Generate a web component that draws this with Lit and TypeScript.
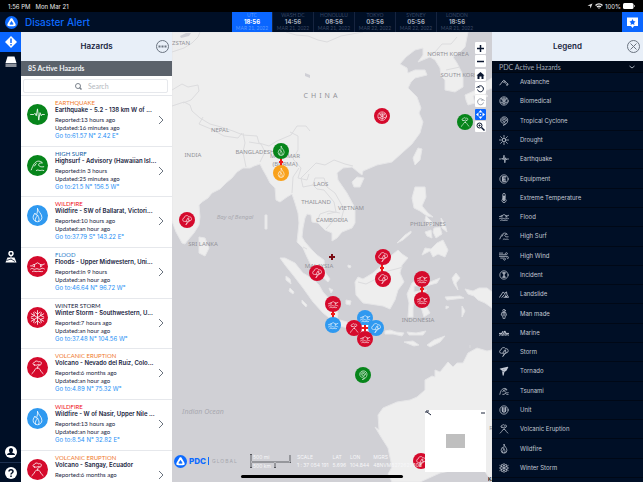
import { LitElement, html, svg, css, nothing, TemplateResult } from "lit";
import { customElement, property } from "lit/decorators.js";
import { classMap } from "lit/directives/class-map.js";

/* Line glyphs on a 24 x 24 grid, drawn with the current colour. */
const GLYPHS: Record<string, TemplateResult> = {
  avalanche: svg`<path d="M2 19 11 8l4 2 3 4 4 3M9 11l2 2 2-2 2 4" stroke-width="2"/><circle cx="19" cy="19" r="1"/>`,
  biomedical: svg`<circle cx="12" cy="12" r="10"/><path d="M12 4v16M12 8c-3-3-5-1-5 1s3 3 5 3 4 2 4 4-2 3-4 1M12 8c3-3 5-1 5 1s-3 3-5 3-4 2-4 4 2 3 4 1M5 6l3 2M19 6l-3 2M4 15h3M20 15h-3"/>`,
  cyclone: svg`<path d="M13 14a3 3 0 1 1 2-4c1 4-2 7-5 7s-6-3-6-7c0-5 4-8 9-8s8 4 8 8c0 7-5 11-11 12 3-1 4-2 5-4M7 10c0-3 2-5 5-5 4 0 6 3 6 6"/>`,
  drought: svg`<circle cx="12" cy="12" r="4"/><path d="M12 1v5M12 18v5M1 12h5M18 12h5M4 4l4 4M16 16l4 4M20 4l-4 4M8 16l-4 4"/>`,
  earthquake: svg`<path d="M1 12h5l2-2 2 4 2-11 2 18 2-12 2 5 1-2h4"/>`,
  equipment: svg`<circle cx="12" cy="12" r="10"/><path d="M16 7H9v10h7M9 12h6" stroke-width="3"/>`,
  temperature: svg`<path d="M9 14V4a3 3 0 0 1 6 0v10a5 5 0 1 1-6 0Z"/><path d="M12 8v10" stroke-width="4"/>`,
  flood: svg`<path d="M1 11h4l2 2V9l5-3 5 3v4l3-4 3-1M1 16c3-3 5 2 8 0s5 2 8 0 4-1 6 0M4 20c3-2 5 1 8 0s5 1 8 0M5 9h2M17 9h2"/>`,
  surf: svg`<path d="M2 19C5 11 8 5 14 5c4 0 6 3 6 3s-5-1-6 2 3 5 8 4M10 20c2-2 4 0 6 0s3-1 6 0M7 13l3-4"/>`,
  wind: svg`<path d="M1 9h16c4 0 4-5 1-5-2 0-3 1-3 3M1 13h19c4 0 4 5 1 5-2 0-2-1-2-2M4 17h9c4 0 3 5 0 5-2 0-2-1-2-2M1 5h8"/>`,
  incident: svg`<circle cx="12" cy="12" r="10"/><path d="M12 7v10M9 7h6M9 17h6" stroke-width="3"/>`,
  landslide: svg`<path d="M1 20 10 7l4 4M7 20l5-6M14 10l4-3 1 6 4 7H12M15 14l3 4M15 18h3" stroke-width="2"/>`,
  manmade: svg`<circle cx="12" cy="4" r="3"/><path d="M8 8h8l2 7-3 2-1 6h-4l-1-6-3-2ZM10 9v7M14 9v7"/>`,
  marine: svg`<path d="M1 13h6l2-5 3 3 2-4 3 6h6M1 17c4-3 6 2 9 0s5 1 7 0 4-1 6 0M6 13l3 2 4-3 4 3" stroke-width="2.4"/>`,
  storm: svg`<path d="M8 15H6a4 4 0 0 1-1-8 6 6 0 0 1 11-3 5 5 0 0 1 2 10l-2 1M13 8l-4 7h4l-4 8 9-11h-4l2-4Z"/>`,
  tornado: svg`<path d="M3 7 21 3l-4 7-5 3-2 9-1-7M6 9l12-3M8 12l8-3M7 8l5 4" stroke-width="2.6"/>`,
  tsunami: svg`<path d="M2 20C4 12 6 8 11 6c5-1 8 1 8 4-3-3-7-1-5 3 1 3 5 4 8 3M9 20h4l2-3 3 3h4M12 9l-3 5"/>`,
  unit: svg`<circle cx="12" cy="12" r="10"/><path d="M8 6v8a4 3 0 0 0 8 0V6M12 6v7" stroke-width="2.6"/>`,
  volcano: svg`<path d="M3 22c3-2 4-6 7-9h4c3 3 4 7 7 9M12 13c0-3 1-4 3-5M7 8C4 8 4 4 7 4c1-3 5-3 6-1 3-1 6 0 5 3 0 2-3 3-5 1-2 2-4 1-6 1Z"/>`,
  wildfire: svg`<path d="M12 1c1 5 7 8 7 14a7 7 0 0 1-14 0c0-3 2-5 3-7 1 2 1 3 2 3 2-3 2-6 2-10ZM9 21c-2-5 2-6 3-10 1 3 4 6 2 10"/>`,
  winter: svg`<path d="M12 1v22M2 6l20 12M22 6 2 18M8 3l4 4 4-4M8 21l4-4 4 4M2 11l5-2-1-5M22 13l-5 2 1 5M2 13l5 2-1 5M22 11l-5-2 1-5"/>`,
};

const glyph = (name: string, width = 1.8) => svg`
  <g fill="none" stroke="currentColor" stroke-width=${width} stroke-linecap="round" stroke-linejoin="round">${GLYPHS[name]}</g>`;

const logo = (id: string) => html`
  <svg class="logo" viewBox="0 0 24 24" role="img" aria-label=${id}>
    <circle cx="12" cy="12" r="12" fill="#0d6bff"/>
    <path d="M12 4c2 0 2 1 3 3l4 7c2 4 0 5-3 5H8c-3 0-5-1-3-5l4-7c1-2 1-3 3-3Z" fill="#fff"/>
    <path d="M12 10l3 5H9Z" fill="#0d6bff" stroke="#0d6bff" stroke-width="1.5" stroke-linejoin="round"/>
  </svg>`;

@customElement("hazard-card")
class HazardCard extends LitElement {
  @property() icon = "";
  @property() color = "";
  @property() kind = "";
  @property() tone = "";
  @property() name = "";
  @property() reported = "";
  @property() changed = "";
  @property() place = "";

  static styles = css`
    :host { display: flex; align-items: flex-start; box-sizing: border-box; padding: 3px 8px 0 6px; border-top: 1px solid #e6e8ec; color: #17233d; }
    .disc { flex: none; width: 21px; height: 21px; margin: 5px 7px 0 0; border-radius: 50%; color: #fff; display: grid; place-items: center; }
    .disc svg { width: 15px; height: 15px; }
    .green { background: #07851b; }
    .blue { background: #2f99f0; }
    .red { background: #d50a2c; }
    .text { flex: 1; min-width: 0; font-size: 6px; line-height: 8px; white-space: nowrap; }
    h3, p { margin: 0; }
    p { font-family: Lato, sans-serif; }
    .kind, .name { line-height: 7px; }
    .name { font-size: 6px; font-weight: 600; margin-bottom: 3px; }
    .orange { color: #f07a2a; }
    .navy { color: #0c5da5; }
    .scarlet { color: #f01020; }
    .sky { color: #2b7fcc; }
    .dark { color: #17233d; }
    a { color: #1e8ff5; text-decoration: none; display: block; }
    .open { flex: none; border: 0; background: none; padding: 0; width: 6px; height: 10px; margin: 16px 0 0 2px; color: #6b7480; display: grid; }
  `;

  render() {
    return html`
      <span class=${classMap({ disc: true, [this.color]: true })}><svg viewBox="0 0 24 24">${glyph(this.icon, 1.3)}</svg></span>
      <div class="text">
        <p class=${classMap({ kind: true, [this.tone]: true })}>${this.kind}</p>
        <h3 class="name">${this.name}</h3>
        <p>Reported:${this.reported}</p>
        ${this.changed ? html`<p>Updated:${this.changed}</p>` : nothing}
        ${this.place ? html`<a href="#map">Go to:${this.place}</a>` : nothing}
      </div>
      <button class="open" aria-label="Open details"><svg viewBox="0 0 6 10"><path d="M1 1l4 4-4 4" fill="none" stroke="currentColor"/></svg></button>`;
  }
}

const LAND = [
  "M172 32V221L176 232 182 243 185 244 188 240 194 233 199 225 200 217 199 205 202 202 208 198 212 193 220 189 226 183 232 178 237 172 243 168 250 168 254 166 260 164 263 170 267 177 270 183 275 188 276 200 280 202 287 197 292 194 295 203 298 213 299 223 297 242 303 248 307 257 312 267 320 275 328 282 330 279 325 272 324 260 317 255 312 250 305 242 302 237 303 228 305 218 307 214 311 215 312 222 318 223 325 230 332 233 332 241 337 238 342 232 352 228 355 223 355 208 347 193 338 180 337 173 343 168 352 167 358 172 362 175 363 171 377 165 392 162 402 153 412 144 420 133 423 122 419 113 421 108 417 97 408 88 411 82 415 78 427 75 425 70 415 70 408 73 407 68 400 64 406 57 415 50 423 48 423 55 418 62 430 57 435 60 440 68 441 76 445 80 445 90 455 92 463 87 463 75 457 63 453 57 460 52 465 47 468 32Z",
  "M199 237 205 238 209 248 205 256 199 253Z",
  "M280 258 285 258 295 263 303 273 313 279 319 285 323 292 332 302 338 313 337 320 333 321 323 313 313 302 303 288 293 275 285 265Z",
  "M333 318 347 322 357 323 370 325 382 330 380 333 360 331 340 326Z",
  "M355 282 358 277 363 279 373 273 382 265 387 262 392 255 398 250 402 254 408 258 402 265 400 273 404 282 398 290 395 300 390 309 383 306 370 304 363 303 356 295Z",
  "M412 283 416 280 430 282 440 278 437 283 426 286 414 286 414 292 427 290 419 296 424 303 430 313 424 317 421 307 415 299 413 308 413 317 408 317 409 303 407 294Z",
  "M415 187 425 187 426 197 422 206 428 213 433 217 427 216 420 211 414 208 412 198Z",
  "M422 255 425 248 431 249 437 243 443 240 448 250 445 257 438 254 433 257 430 251Z",
  "M426 216 430 220 434 224 429 226 425 220ZM434 228 440 227 442 234 436 238 433 232ZM425 232 431 230 432 238 427 236ZM441 218 445 224 447 232 442 228Z",
  "M397 243 405 235 411 231 411 233 403 240Z",
  "M415 165 413 158 418 148 422 149 420 160Z",
  "M352 182 357 177 364 178 360 187 354 187Z",
  "M465 95 474 91 482 84 492 78V88L482 92 488 96 482 99 478 95 473 96 475 103 468 105 466 100Z",
  "M465 289 473 291 479 288 487 288 492 292V308L485 303 478 300 474 296 468 294Z",
  "M452 278 456 273 460 278 456 283 458 290 454 284ZM445 297 460 296 464 298 447 300Z",
  "M385 331l5-1 6 2 8 1-2 3-9-2-8 0ZM407 332l9 1 10-2-3 4-14 0ZM404 342l9-1 6 4-5 1ZM427 345l7-5 11-4-5 6-10 5ZM462 306l3 5-3 6ZM446 306l3 1-3 2Z",
  "M492 350 487 351 477 348 468 353 463 363 457 363 453 367 448 362 440 372 435 370 435 377 432 376 425 380 425 390 417 397 410 400 397 402 383 408 378 415 379 430 375 427 381 437 388 448 392 467 388 474 392 482H420L440 473 475 466 484 470 492 482Z",
  "M286 276l4 3 1 5-5-4ZM290 288l4 4-1 2-4-3ZM302 300l5 5-1 2-4-4ZM346 300l5 1-1 4-4-1ZM265 215l2 0 0 14-2 0ZM348 265l3 1-1 2-2-1ZM329 288l4 2-2 3Z",
];

const LAKES = ["M305 73l5 2 0 3-5-2Z", "M180 36l6-3 5 0-2 3-8 2Z"];

const BORDERS = [
  "M172 52l12-4 8-5 6-6 2-5M286 32l10 3 12 1 10 4 9 2 14-6 22-4",
  "M172 106l12-4 6 3 2 6 8 7 10 6 11 3 12 4 10 4 14 1 2 7 10 3 8-5 14-6 6-9 9 0 4 5",
  "M203 117l-4 7 12 5 13 7 14 2 4-5M243 133l2 10-2 9 3 15M249 142l12 2 4 8-5 10M290 132l8 4 0 14-5 9 8 9-3 10 9 2 2-6",
  "M299 168l-6 9-1 16M309 170l7-7 9 2 9-5 11 4 8 2M309 170l-8 8 2 9 10-2 4 4 7 1 10 12 2 10-9 2M313 185l2-7 9 0 3 9 8 6 9 16-3 11-8 1-7 8M317 222l3-8 9-3 11 2",
  "M303 247l4 2M358 282l8 2 14-7 4-5 12-3 7-2M172 90l10-6 6 3 10-2 1 6-8 9-8 3M430 55l5-3 7-8 9 0 6-7M446 70l14-3M470 345v3",
];

type Label = [string, number, number, string?];
const LABELS: Label[] = [
  ["ZSTAN", 181, 45], ["NORTH KOREA", 448, 56], ["SOUTH KOREA", 461, 77], ["NEPAL", 220, 132],
  ["INDIA", 193, 157], ["BANGLADESH", 255, 154], ["MYANMAR", 285, 158], ["(BURMA)", 285, 166],
  ["LAOS", 321, 186], ["THAILAND", 316, 204], ["VIETNAM", 351, 210], ["CAMBODIA", 332, 222],
  ["MALAYSIA", 319, 268], ["SRI LANKA", 203, 246], ["PHILIPPINES", 428, 226], ["INDONESIA", 418, 322],
  ["R", 491, 430], ["CHINA", 322, 98, "big"], ["Bay of Bengal", 235, 219, "sea"], ["Indian Ocean", 203, 414, "sea ocean"],
];

const RED = "#d50a2c", GREEN = "#07851b", BLUE = "#2f99f0", AMBER = "#f9a11b";
const MARKERS: [string, string, number, number][] = [
  ["biomedical", RED, 382, 116], ["volcano", GREEN, 465, 122], ["wildfire", GREEN, 281, 151],
  ["wildfire", AMBER, 281, 173], ["storm", RED, 187, 220], ["storm", RED, 317, 273],
  ["storm", RED, 383, 257], ["storm", RED, 383, 279], ["flood", RED, 422, 279], ["flood", RED, 422, 300],
  ["flood", RED, 333, 304], ["flood", BLUE, 333, 325], ["flood", BLUE, 365, 318], ["storm", BLUE, 376, 328],
  ["volcano", RED, 354, 328], ["flood", RED, 365, 339], ["cyclone", GREEN, 363, 375], ["storm", RED, 421, 461],
];
const LINKS: [number, number][] = [[281, 162], [382, 268], [422, 289], [333, 314]];

@customElement("hazard-map")
class HazardMap extends LitElement {
  static styles = css`
    :host { display: block; position: relative; overflow: hidden; background: #d0d0d5; }
    .canvas { position: absolute; inset: 0; width: 100%; height: 100%; }
    .land { fill: #eeeeee; stroke: #e6e6e8; stroke-width: 1; stroke-linejoin: round; }
    .lake { fill: #cfcfd5; }
    .border { fill: none; stroke: #dcdcde; stroke-width: 1; stroke-linejoin: round; }
    text { font-family: "Noto Sans", sans-serif; font-size: 6px; fill: #929298; text-anchor: middle; }
    .big { font-size: 7px; letter-spacing: 3px; }
    .sea { font-style: italic; fill: #a9a9b0; }
    .ocean { font-size: 7px; }
    .tools { position: absolute; top: 10px; right: 6px; display: grid; gap: 2px; }
    .group { display: grid; gap: 1px; }
    .tools button { border: 0; padding: 0; width: 11px; height: 12px; border-radius: 1px; background: #fff; color: #0b1730; display: grid; place-items: center; }
    .tools .short button { height: 11px; }
    .tools svg { width: 9px; height: 9px; }
    .tools .on { background: #0a66ff; color: #fff; }
    .tools .off { color: #9aa0aa; }
    .foot { position: absolute; left: 2px; bottom: 13px; display: flex; align-items: center; color: #f7f7f9; white-space: nowrap; }
    .logo { width: 13px; height: 13px; display: block; }
    .brand { color: #0d6bff; font-weight: 800; font-size: 8px; padding: 0 2px; border-right: 1px solid #0d6bff; line-height: 8px; }
    .global { color: #a6a7ae; font-size: 5px; padding-left: 3px; letter-spacing: 1px; width: 38px; }
    .scale { width: 41px; height: 14px; margin-right: 6px; }
    .scale text { font-family: Inter, sans-serif; font-size: 5px; fill: #f7f7f9; text-anchor: start; }
    dl { display: flex; gap: 4px; margin: 0; font-size: 5px; line-height: 8px; }
    dd { margin: 0; }
    .inset { position: absolute; right: 6px; bottom: 10px; width: 61px; height: 62px; background: #fff; display: grid; place-items: center; }
    .inset span { width: 19px; height: 14px; background: #bfbfbf; }
    .inset svg { position: absolute; inset: 0; width: 100%; height: 100%; }
    .credit { position: absolute; right: 0; bottom: 0; width: 4px; overflow: hidden; font-size: 5px; line-height: 6px; font-weight: 700; color: #222; }
  `;

  private tool(label: string, art: TemplateResult, cls = "") {
    return html`<button class=${cls} aria-label=${label}><svg viewBox="0 0 18 18" fill="none" stroke="currentColor" stroke-width="2">${art}</svg></button>`;
  }

  render() {
    return html`
      <svg class="canvas" viewBox="172 32 320 450" preserveAspectRatio="xMidYMid slice">
        ${LAND.map((d) => svg`<path class="land" d=${d}/>`)}
        ${LAKES.map((d) => svg`<path class="lake" d=${d}/>`)}
        ${BORDERS.map((d) => svg`<path class="border" d=${d}/>`)}
        ${LABELS.map(([t, x, y, c]) => svg`<text class=${c ?? ""} x=${x} y=${y}>${t}</text>`)}
        <path d="M332 254v6M329 257h6" stroke="#7a0c14" stroke-width="2"/>
        ${LINKS.map(([x, y]) => svg`<path d="M${x} ${y - 4}v8M${x - 2} ${y}h4" stroke="#f01818" stroke-width="2"/>`)}
        ${MARKERS.map(([n, c, x, y]) => svg`
          <g color="#fff"><circle cx=${x} cy=${y} r="8" fill=${c}/>
          <g transform="translate(${x - 5} ${y - 5}) scale(.43)">${glyph(n, 1.4)}</g></g>`)}
        <rect x="362" y="325" width="6" height="6" fill="#fff"/>
        <path d="M365 325v6M362 328h6" stroke="#f01818" stroke-width="2"/>
      </svg>
      <div class="tools">
        <div class="group">
          ${this.tool("Zoom in", svg`<path d="M9 2v14M2 9h14" stroke-width="3"/>`)}
          ${this.tool("Zoom out", svg`<path d="M2 9h14" stroke-width="3"/>`)}
        </div>
        <div class="group">
          ${this.tool("Home", svg`<path d="M9 2 1 9h2v7h4v-5h4v5h4V9h2Z" fill="currentColor" stroke="none"/>`)}
          ${this.tool("Previous view", svg`<path d="M4 6a6 6 0 1 1-1 5M1 8l3-3 3 3"/>`)}
          ${this.tool("Next view", svg`<path d="M14 6a6 6 0 1 0 1 5M17 8l-3-3-3 3"/>`, "off")}
        </div>
        <div class="group short">
          ${this.tool("Pan", svg`<path d="M9 0l4 5H5ZM9 18l4-5H5ZM0 9l5-4v8ZM18 9l-5-4v8ZM8 8h2v2H8Z" fill="currentColor" stroke="none"/>`, "on")}
          ${this.tool("Zoom to area", svg`<circle cx="7" cy="7" r="5"/><path d="M11 11l6 6" stroke-width="3"/><path d="M7 5v4M5 7h4"/>`)}
        </div>
      </div>
      <div class="foot">
        ${logo("Pacific Disaster Center")}<span class="brand">PDC</span><span class="global">GLOBAL</span>
        <svg class="scale" viewBox="0 0 41 14">
          <path d="M1 0v14M1 8h39V1M25 8v6" fill="none" stroke="#55565c" stroke-width="2"/>
          <path d="M1 1v12M1 8h39V1M25 8v5" fill="none" stroke="#d8d8dc"/>
          <text x="3" y="5">500 mi</text><text x="3" y="14">500 km</text>
        </svg>
        <dl>
          <div><dt>SCALE</dt><dd>1 : 37 054 191</dd></div>
          <div><dt>LAT</dt><dd>5.696</dd></div>
          <div><dt>LON</dt><dd>104.844</dd></div>
          <div><dt>MGRS</dt><dd>48NVM8272629608</dd></div>
        </dl>
      </div>
      <div class="inset"><span></span>
        <svg viewBox="0 0 61 62"><path d="M2 2l4 3M1 1h3M1 1v2M56 3h4" fill="none" stroke="#1a2238"/></svg>
      </div>
      <div class="credit">Ka</div>`;
  }
}

const CLOCKS = [
  ["UTC", "18:56", "MAR 21, 2022"], ["WASH DC", "14:56", "MAR 21, 2022"], ["HONOLULU", "08:56", "MAR 21, 2022"],
  ["TOKYO", "03:56", "MAR 22, 2022"], ["SYDNEY", "05:56", "MAR 22, 2022"], ["LONDON", "18:56", "MAR 21, 2022"],
];

const HAZARDS = [
  ["earthquake", "green", "EARTHQUAKE", "orange", "Earthquake - 5.2 - 138 km W of ...", "13 hours ago", "16 minutes ago", "61.57 N° 2.42 E°"],
  ["surf", "green", "HIGH SURF", "navy", "Highsurf - Advisory (Hawaiian Isl...", "in 3 hours", "25 minutes ago", "21.5 N° 156.5 W°"],
  ["wildfire", "blue", "WILDFIRE", "scarlet", "Wildfire - SW of Ballarat, Victori...", "10 hours ago", "an hour ago", "37.79 S° 143.22 E°"],
  ["flood", "red", "FLOOD", "sky", "Floods - Upper Midwestern, Uni...", "in 9 hours", "an hour ago", "46.64 N° 96.72 W°"],
  ["winter", "red", "WINTER STORM", "dark", "Winter Storm - Southwestern, U...", "7 hours ago", "an hour ago", "37.48 N° 104.56 W°"],
  ["volcano", "red", "VOLCANIC ERUPTION", "orange", "Volcano - Nevado del Ruiz, Colo...", "6 months ago", "an hour ago", "4.89 N° 75.32 W°"],
  ["wildfire", "blue", "WILDFIRE", "scarlet", "Wildfire - W of Nasir, Upper Nile ...", "13 hours ago", "an hour ago", "8.54 N° 32.82 E°"],
  ["volcano", "red", "VOLCANIC ERUPTION", "orange", "Volcano - Sangay, Ecuador", "6 months ago", "", ""],
];

const LEGEND = [
  ["avalanche", "Avalanche"], ["biomedical", "Biomedical"], ["cyclone", "Tropical Cyclone"], ["drought", "Drought"],
  ["earthquake", "Earthquake"], ["equipment", "Equipment"], ["temperature", "Extreme Temperature"], ["flood", "Flood"],
  ["surf", "High Surf"], ["wind", "High Wind"], ["incident", "Incident"], ["landslide", "Landslide"],
  ["manmade", "Man made"], ["marine", "Marine"], ["storm", "Storm"], ["tornado", "Tornado"], ["tsunami", "Tsunami"],
  ["unit", "Unit"], ["volcano", "Volcanic Eruption"], ["wildfire", "Wildfire"], ["winter", "Winter Storm"],
];

@customElement("app-root")
class AppRoot extends LitElement {
  static styles = css`
    :host { display: flex; flex-direction: column; height: 100vh; overflow: hidden; position: relative; font-family: Inter, "Open Sans", sans-serif; background: #000f26; color: #17233d; }
    button { border: 0; padding: 0; background: none; font: inherit; color: inherit; display: grid; place-items: center; }
    h1, h2, p, ul { margin: 0; padding: 0; list-style: none; }
    .status { flex: none; height: 12px; background: #000; color: #e8e8e8; display: flex; align-items: center; gap: 5px; padding: 0 8px; font-size: 6px; }
    .status .right { margin-left: auto; display: flex; align-items: center; gap: 2px; }
    .status svg { height: 6px; display: block; }
    .top { flex: none; height: 20px; display: flex; }
    .brand { flex: 0 0 232px; box-sizing: border-box; display: flex; align-items: center; gap: 7px; padding-left: 5px; }
    .logo { width: 13px; height: 13px; }
    h1 { font-size: 10px; font-weight: 500; color: #0d6bff; }
    .clocks { display: flex; flex: 1; }
    .clock { width: 40px; border-right: 1px solid #16243f; text-align: center; font-family: Lato, sans-serif; font-size: 5px; line-height: 6px; color: #3a4864; white-space: nowrap; }
    .clock b { display: block; font-family: Inter, sans-serif; font-size: 6px; line-height: 7px; color: #a3abba; }
    .clock:last-child { border: 0; }
    .clock.on { background: #0a66ff; color: #5b9bff; }
    .clock.on b { color: #fff; }
    .chat { width: 21px; background: #0a66ff; }
    .chat svg { width: 13px; height: 13px; }
    .body { flex: 1; min-height: 0; display: flex; }
    .rail { flex: none; width: 21px; display: flex; flex-direction: column; color: #fff; }
    .rail button { width: 21px; height: 20px; }
    .rail svg { width: 12px; height: 12px; }
    .rail .on { background: #0a66ff; }
    .rail .pin { margin: auto 0; }
    .rail .help { border-top: 1px solid #1d3050; }
    .panel { flex: none; width: 151px; display: flex; flex-direction: column; min-height: 0; }
    .head { flex: none; height: 29px; background: #e8eff8; display: grid; grid-template-columns: 16px 1fr 16px; align-items: center; padding: 0 2px; box-sizing: border-box; }
    .head h2 { grid-column: 2; text-align: center; font-size: 8px; line-height: 12px; font-weight: 600; padding-bottom: 2px; }
    .head svg { width: 13px; height: 13px; color: #6b7480; display: block; }
    .list { background: #fff; overflow: hidden; }
    .count { flex: none; height: 15px; box-sizing: border-box; background: #5b626b; color: #f2f3f5; font-family: Lato, sans-serif; font-size: 7px; font-weight: 700; line-height: 14px; padding-left: 7px; }
    .find { flex: none; height: 19px; box-sizing: border-box; padding: 3px 4px 2px 2px; }
    .box { height: 14px; box-sizing: border-box; border: 1px solid #e6e8ec; border-radius: 2px; display: flex; align-items: center; justify-content: center; gap: 6px; }
    .box svg { width: 7px; height: 7px; color: #7c838d; flex: none; }
    .box input { flex: 0 1 28px; min-width: 0; border: 0; outline: 0; padding: 0; font-family: Lato, sans-serif; font-size: 7px; background: none; appearance: none; }
    .box input::placeholder { color: #b4b8be; }
    .box input::-webkit-search-cancel-button { display: none; }
    .cards { flex: 1; min-height: 0; display: flex; flex-direction: column; overflow: hidden; }
    hazard-card { flex: 0 0 13.1%; }
    hazard-map { flex: 1; min-width: 0; }
    .legend { color: #c3c9d4; }
    .legend .head { color: #17233d; }
    .section { flex: none; height: 12px; display: flex; align-items: center; justify-content: space-between; padding: 0 8px 0 7px; background: #000a1a; font-family: Lato, sans-serif; font-size: 7px; color: #a3abb8; border-bottom: 1px solid #000610; box-sizing: border-box; }
    .section svg { width: 6px; height: 4px; }
    .kinds { flex: 1; min-height: 0; display: grid; grid-auto-rows: 1fr; padding-bottom: 4px; }
    .kinds li { display: grid; grid-template-columns: 10px 1fr; gap: 11px; align-items: center; padding: 0 7px; font-size: 6px; line-height: 8px; border-bottom: 1px solid #000816; box-sizing: border-box; }
    .kinds svg { width: 10px; height: 10px; display: block; }
    .home { position: absolute; left: 50%; bottom: 4px; width: 162px; height: 3px; margin-left: -81px; border-radius: 2px; background: #000; }
  `;

  render() {
    return html`
      <div class="status">
        <span>1:56 PM</span><span>Mon Mar 21</span>
        <span class="right">
          <svg viewBox="0 0 12 12"><path d="M11 1 7 11 6 6 1 5Z" fill="#ddd"/></svg>
          <svg viewBox="0 0 16 12"><path d="M1 5c4-4 10-4 14 0M4 8c2-2 6-2 8 0M7 10h2" fill="none" stroke="#eee" stroke-width="3"/></svg>
          <span>100%</span>
          <svg viewBox="0 0 24 12"><rect width="21" height="12" rx="3" fill="#fff"/><path d="M23 4v4" stroke="#999" stroke-width="2"/></svg>
        </span>
      </div>
      <header class="top">
        <div class="brand">${logo("Disaster Alert logo")}<h1>Disaster Alert</h1></div>
        <div class="clocks">
          ${CLOCKS.map(([city, time, date], i) => html`<div class=${classMap({ clock: true, on: i === 0 })}>${city}<b>${time}</b>${date}</div>`)}
        </div>
        <button class="chat" aria-label="News"><svg viewBox="0 0 26 26"><path d="M2 3h22v17h-8l-3 4-3-4H2Z" fill="#fff"/><path d="M13 6l2 4 4 1-3 3 1 4-4-2-4 2 1-4-3-3 4-1Z" fill="#0a66ff"/></svg></button>
      </header>
      <div class="body">
        <nav class="rail">
          <button class="on" aria-label="Hazards"><svg viewBox="0 0 24 24"><path d="M12 0 24 12 12 24 0 12Z" fill="#fff"/><path d="M12 5v9M12 16v3" stroke="#0a66ff" stroke-width="3"/></svg></button>
          <button aria-label="Layers"><svg viewBox="0 0 24 24"><path d="M5 1h14l4 13H1Z" fill="#fff"/><path d="M1 15h22v7H1Z" fill="#8c929c"/></svg></button>
          <button class="pin" aria-label="Places"><svg viewBox="0 0 24 24"><path d="M5 13h14l4 10H1Z" fill="#fff"/><path d="M3 19l9-3 8 5M12 9v8" stroke="#000f26" stroke-width="1.5" fill="none"/><circle cx="12" cy="5" r="4" fill="none" stroke="#fff" stroke-width="3"/><path d="M12 9v7" stroke="#fff" stroke-width="2"/></svg></button>
          <button aria-label="Account"><svg viewBox="0 0 24 24"><circle cx="12" cy="12" r="12" fill="#fff"/><path d="M12 4c3 0 4 2 4 4 0 3-1 4-2 5 3 1 6 2 6 5H4c0-3 3-4 6-5-1-1-2-2-2-5 0-2 1-4 4-4Z" fill="#000f26"/></svg></button>
          <button class="help" aria-label="Help"><svg viewBox="0 0 24 24"><circle cx="12" cy="12" r="12" fill="#fff"/><path d="M8 9c0-5 8-5 8 0 0 3-4 3-4 6M12 17v3" fill="none" stroke="#000f26" stroke-width="3"/></svg></button>
        </nav>
        <section class="panel list">
          <div class="head"><h2>Hazards</h2>
            <button aria-label="More options"><svg viewBox="0 0 26 26" fill="none" stroke="currentColor"><circle cx="13" cy="13" r="12" stroke-width="2"/><path d="M5 13h4M11 13h4M17 13h4" stroke-width="4"/></svg></button>
          </div>
          <p class="count">85 Active Hazards</p>
          <div class="find"><label class="box">
            <svg viewBox="0 0 14 14" fill="none" stroke="currentColor" stroke-width="2"><circle cx="6" cy="6" r="5"/><path d="M9 9l4 4" stroke-width="3"/></svg>
            <input type="search" aria-label="Search hazards" placeholder="Search">
          </label></div>
          <div class="cards">
            ${HAZARDS.map(([icon, color, kind, tone, name, rep, upd, place]) => html`
              <hazard-card .icon=${icon} .color=${color} .kind=${kind} .tone=${tone} .name=${name} .reported=${rep} .changed=${upd} .place=${place}></hazard-card>`)}
          </div>
        </section>
        <hazard-map id="map"></hazard-map>
        <aside class="panel legend">
          <div class="head"><h2>Legend</h2>
            <button aria-label="Close legend"><svg viewBox="0 0 26 26" fill="none" stroke="currentColor"><circle cx="13" cy="13" r="12" stroke-width="2"/><path d="M7 7l12 12M19 7 7 19" stroke-width="2"/></svg></button>
          </div>
          <div class="section"><span>PDC Active Hazards</span><svg viewBox="0 0 12 8" fill="none" stroke="currentColor" stroke-width="2"><path d="M1 2l5 4 5-4"/></svg></div>
          <ul class="kinds">${LEGEND.map(([icon, name]) => html`<li><svg viewBox="0 0 24 24">${glyph(icon)}</svg>${name}</li>`)}</ul>
        </aside>
      </div>
      <div class="home"></div>`;
  }
}
